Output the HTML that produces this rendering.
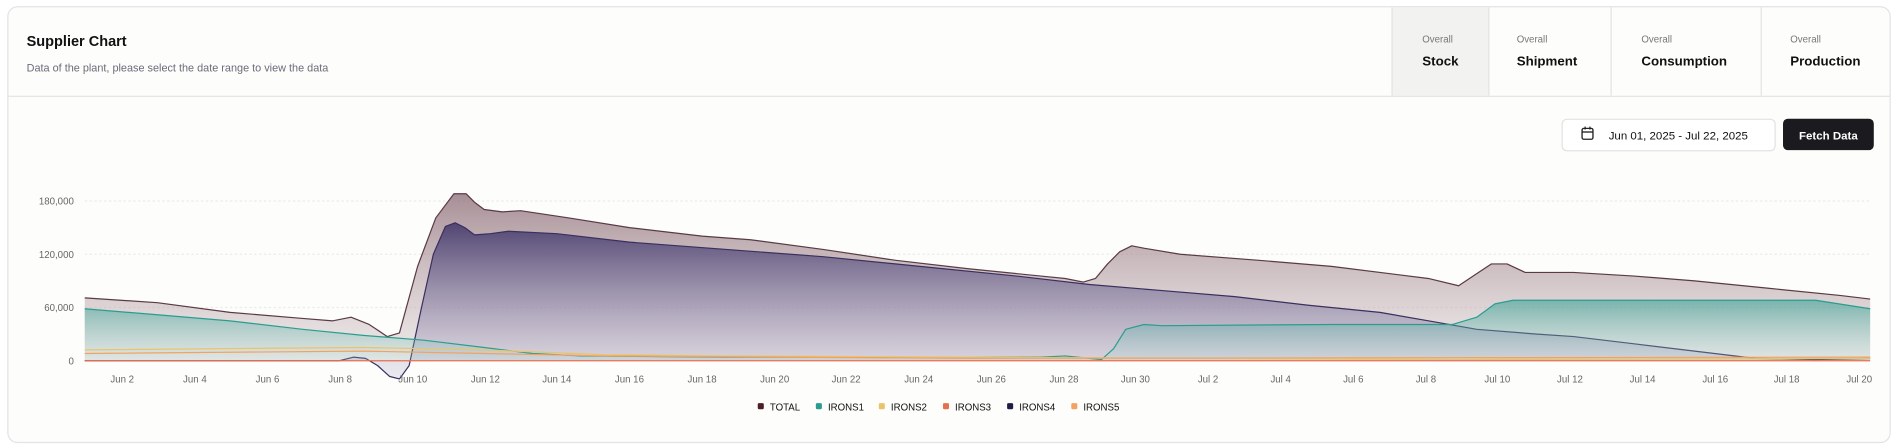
<!DOCTYPE html>
<html><head><meta charset="utf-8"><style>
html,body{margin:0;padding:0;background:#fff;width:1898px;height:448px;overflow:hidden}
svg{display:block}
text{font-family:"Liberation Sans",sans-serif}
</style></head><body>
<svg width="1898" height="448" viewBox="0 0 1568 370" xmlns="http://www.w3.org/2000/svg" stroke-linejoin="round">
<defs>
<linearGradient id="gT" x1="0" y1="0" x2="0" y2="1"><stop offset="0" stop-color="#8a6a74" stop-opacity=".75"/><stop offset="1" stop-color="#c9b8bd" stop-opacity=".3"/></linearGradient>
<linearGradient id="gP" x1="0" y1="0" x2="0" y2="1"><stop offset="0" stop-color="#3f3568" stop-opacity=".85"/><stop offset="1" stop-color="#b8b3d0" stop-opacity=".25"/></linearGradient>
<linearGradient id="gG" x1="0" y1="0" x2="0" y2="1"><stop offset="0" stop-color="#2a9d8f" stop-opacity=".55"/><stop offset="1" stop-color="#a9d8cf" stop-opacity=".2"/></linearGradient>
</defs>
<rect x="0" y="0" width="1568" height="370" fill="#fff"/>
<rect x="6.5" y="5.5" width="1555" height="360" rx="8" fill="#fdfdfb" stroke="#e3e3e3"/>
<rect x="1150" y="6" width="80" height="73" fill="#f2f2f0"/>
<line x1="1150" y1="6" x2="1150" y2="79" stroke="#e3e3e3"/>
<line x1="1230" y1="6" x2="1230" y2="79" stroke="#e3e3e3"/>
<line x1="1331" y1="6" x2="1331" y2="79" stroke="#e3e3e3"/>
<line x1="1455" y1="6" x2="1455" y2="79" stroke="#e3e3e3"/>
<line x1="7" y1="79.5" x2="1561" y2="79.5" stroke="#e3e3e3"/>
<text x="22" y="38" font-size="12" font-weight="bold" fill="#111">Supplier Chart</text>
<text x="22" y="59" font-size="9" fill="#6b6b7a">Data of the plant, please select the date range to view the data</text>
<g font-size="8" fill="#777"><text x="1175" y="35">Overall</text><text x="1253" y="35">Overall</text><text x="1356" y="35">Overall</text><text x="1479" y="35">Overall</text></g>
<g font-size="11" font-weight="bold" fill="#111"><text x="1175" y="54">Stock</text><text x="1253" y="54">Shipment</text><text x="1356" y="54">Consumption</text><text x="1479" y="54">Production</text></g>
<rect x="1290.5" y="98.5" width="176" height="26" rx="4" fill="#fff" stroke="#e2e2e2"/>
<rect x="1307" y="106" width="9" height="9" rx="1.5" fill="none" stroke="#222" stroke-width="1.1"/>
<line x1="1307" y1="109" x2="1316" y2="109" stroke="#222" stroke-width="1.1"/>
<line x1="1309.5" y1="104.5" x2="1309.5" y2="107" stroke="#222"/><line x1="1313.5" y1="104.5" x2="1313.5" y2="107" stroke="#222"/>
<text x="1329" y="115" font-size="9.5" fill="#111">Jun 01, 2025 - Jul 22, 2025</text>
<rect x="1473" y="98" width="75" height="26" rx="4" fill="#1b1b1f"/>
<text x="1510.5" y="115" font-size="9.5" font-weight="bold" fill="#fff" text-anchor="middle">Fetch Data</text>
<g stroke="#ececec" stroke-dasharray="2 2"><line x1="70" y1="166" x2="1545" y2="166"/><line x1="70" y1="210" x2="1545" y2="210"/><line x1="70" y1="254" x2="1545" y2="254"/></g>
<g font-size="8" fill="#666" text-anchor="end"><text x="61" y="169">180,000</text><text x="61" y="213">120,000</text><text x="61" y="257">60,000</text><text x="61" y="301">0</text></g>
<path d="M70,246 L130,250 L190,258 L250,263 L275,265 L290,262 L305,268 L320,278 L330,275 L345,220 L360,180 L375,160 L385,160 L392,167 L400,173 L415,175 L430,174 L470,180 L520,188 L580,195 L620,198 L680,206 L740,215 L800,222 L860,228 L880,230 L895,233 L905,230 L915,218 L925,208 L935,203 L945,205 L975,210 L1040,215 L1100,220 L1180,230 L1205,236 L1220,226 L1232,218 L1245,218 L1260,225 L1300,225 L1350,228 L1400,232 L1460,238 L1520,244 L1545,247 L1545,298 L70,298 Z" fill="url(#gT)"/>
<path d="M70,246 L130,250 L190,258 L250,263 L275,265 L290,262 L305,268 L320,278 L330,275 L345,220 L360,180 L375,160 L385,160 L392,167 L400,173 L415,175 L430,174 L470,180 L520,188 L580,195 L620,198 L680,206 L740,215 L800,222 L860,228 L880,230 L895,233 L905,230 L915,218 L925,208 L935,203 L945,205 L975,210 L1040,215 L1100,220 L1180,230 L1205,236 L1220,226 L1232,218 L1245,218 L1260,225 L1300,225 L1350,228 L1400,232 L1460,238 L1520,244 L1545,247" fill="none" stroke="#5a3a45" stroke-width="1"/>
<path d="M70,298 L280,298 L292,295 L302,296 L312,302 L322,311 L330,313 L338,302 L348,255 L358,210 L368,187 L376,184 L384,188 L392,194 L405,193 L420,191 L460,193 L520,200 L600,206 L680,212 L760,220 L840,228 L900,235 L960,240 L1020,245 L1080,252 L1140,258 L1180,265 L1220,272 L1270,276 L1300,278 L1350,284 L1400,290 L1450,296 L1500,297 L1545,296 L1545,298 Z" fill="url(#gP)"/>
<path d="M70,298 L280,298 L292,295 L302,296 L312,302 L322,311 L330,313 L338,302 L348,255 L358,210 L368,187 L376,184 L384,188 L392,194 L405,193 L420,191 L460,193 L520,200 L600,206 L680,212 L760,220 L840,228 L900,235 L960,240 L1020,245 L1080,252 L1140,258 L1180,265 L1220,272 L1270,276 L1300,278 L1350,284 L1400,290 L1450,296 L1500,297 L1545,296" fill="none" stroke="#3a2f5e" stroke-width="1"/>
<path d="M70,255 L130,260 L190,265 L250,272 L300,277 L350,281 L400,287 L440,292 L480,294 L600,295 L860,295 L880,294 L900,296 L910,297 L920,288 L930,272 L945,268 L960,269 L1100,268 L1200,268 L1220,262 L1235,251 L1250,248 L1400,248 L1500,248 L1545,255 L1545,298 L70,298 Z" fill="url(#gG)"/>
<path d="M70,255 L130,260 L190,265 L250,272 L300,277 L350,281 L400,287 L440,292 L480,294 L600,295 L860,295 L880,294 L900,296 L910,297 L920,288 L930,272 L945,268 L960,269 L1100,268 L1200,268 L1220,262 L1235,251 L1250,248 L1400,248 L1500,248 L1545,255" fill="none" stroke="#2a9d8f" stroke-width="1"/>
<path d="M70,289 L300,287 L400,289 L500,293 L600,294 L800,295 L1200,297 L1545,296" fill="none" stroke="#e9c46a" stroke-width="1"/>
<path d="M70,292 L300,290 L400,292 L500,294 L800,296 L1545,295" fill="none" stroke="#f4a261" stroke-width="1"/>
<path d="M70,298 L1545,298" stroke="#e76f51" stroke-width="1"/>
<g font-size="8" fill="#666" text-anchor="middle">
<text x="101" y="316">Jun 2</text><text x="161" y="316">Jun 4</text><text x="221" y="316">Jun 6</text><text x="281" y="316">Jun 8</text><text x="341" y="316">Jun 10</text><text x="401" y="316">Jun 12</text><text x="460" y="316">Jun 14</text><text x="520" y="316">Jun 16</text><text x="580" y="316">Jun 18</text><text x="640" y="316">Jun 20</text><text x="699" y="316">Jun 22</text><text x="759" y="316">Jun 24</text><text x="819" y="316">Jun 26</text><text x="879" y="316">Jun 28</text><text x="938" y="316">Jun 30</text><text x="998" y="316">Jul 2</text><text x="1058" y="316">Jul 4</text><text x="1118" y="316">Jul 6</text><text x="1178" y="316">Jul 8</text><text x="1237" y="316">Jul 10</text><text x="1297" y="316">Jul 12</text><text x="1357" y="316">Jul 14</text><text x="1417" y="316">Jul 16</text><text x="1476" y="316">Jul 18</text><text x="1536" y="316">Jul 20</text></g>
<g font-size="8" fill="#111">
<rect x="626" y="333" width="5" height="5" rx="1" fill="#4a1f26"/><text x="636" y="339">TOTAL</text>
<rect x="674" y="333" width="5" height="5" rx="1" fill="#2a9d8f"/><text x="684" y="339">IRONS1</text>
<rect x="726" y="333" width="5" height="5" rx="1" fill="#e9c46a"/><text x="736" y="339">IRONS2</text>
<rect x="779" y="333" width="5" height="5" rx="1" fill="#e76f51"/><text x="789" y="339">IRONS3</text>
<rect x="832" y="333" width="5" height="5" rx="1" fill="#1f1d45"/><text x="842" y="339">IRONS4</text>
<rect x="885" y="333" width="5" height="5" rx="1" fill="#f4a261"/><text x="895" y="339">IRONS5</text>
</g>
</svg>
</body></html>
